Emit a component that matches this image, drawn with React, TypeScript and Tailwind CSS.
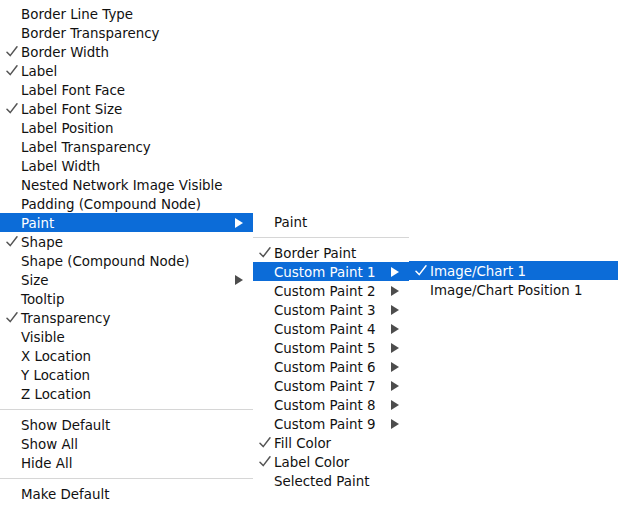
import React from "react";

type Item =
  | { sep: true }
  | { label: string; checked?: boolean; sub?: boolean; active?: boolean; sep?: false };

const mainItems: Item[] = [
  { label: "Border Line Type" },
  { label: "Border Transparency" },
  { label: "Border Width", checked: true },
  { label: "Label", checked: true },
  { label: "Label Font Face" },
  { label: "Label Font Size", checked: true },
  { label: "Label Position" },
  { label: "Label Transparency" },
  { label: "Label Width" },
  { label: "Nested Network Image Visible" },
  { label: "Padding (Compound Node)" },
  { label: "Paint", sub: true, active: true },
  { label: "Shape", checked: true },
  { label: "Shape (Compound Node)" },
  { label: "Size", sub: true },
  { label: "Tooltip" },
  { label: "Transparency", checked: true },
  { label: "Visible" },
  { label: "X Location" },
  { label: "Y Location" },
  { label: "Z Location" },
  { sep: true },
  { label: "Show Default" },
  { label: "Show All" },
  { label: "Hide All" },
  { sep: true },
  { label: "Make Default" },
];

const paintItems: Item[] = [
  { label: "Paint" },
  { sep: true },
  { label: "Border Paint", checked: true },
  { label: "Custom Paint 1", sub: true, active: true },
  { label: "Custom Paint 2", sub: true },
  { label: "Custom Paint 3", sub: true },
  { label: "Custom Paint 4", sub: true },
  { label: "Custom Paint 5", sub: true },
  { label: "Custom Paint 6", sub: true },
  { label: "Custom Paint 7", sub: true },
  { label: "Custom Paint 8", sub: true },
  { label: "Custom Paint 9", sub: true },
  { label: "Fill Color", checked: true },
  { label: "Label Color", checked: true },
  { label: "Selected Paint" },
];

const chartItems: Item[] = [
  { label: "Image/Chart 1", checked: true, active: true },
  { label: "Image/Chart Position 1" },
];

function Check({ light }: { light?: boolean }) {
  return (
    <svg width="12" height="11" viewBox="0 0 12 11" className="shrink-0">
      <path
        d="M1 6.2 L4.2 9.6 L11 0.8"
        fill="none"
        stroke={light ? "#ffffff" : "#555555"}
        strokeWidth="1.5"
        strokeLinecap="round"
        strokeLinejoin="round"
      />
    </svg>
  );
}

function Arrow({ light }: { light?: boolean }) {
  return (
    <svg width="8" height="10" viewBox="0 0 8 10" className="shrink-0">
      <path d="M0 0 L8 5 L0 10 Z" fill={light ? "#ffffff" : "#4d4d4d"} />
    </svg>
  );
}

function Menu({ items, className }: { items: Item[]; className: string }) {
  return (
    <div className={`flex flex-col bg-white py-1 ${className}`}>
      {items.map((it, i) =>
        it.sep ? (
          <div key={i} className="flex h-[12px] items-center">
            <div className="h-px w-full bg-[#d6d6d6]" />
          </div>
        ) : (
          <div
            key={i}
            className={`flex h-[19px] items-center pr-[10px] ${
              it.active ? "bg-[#0c6cd8] text-white" : "text-[#111]"
            }`}
          >
            <div className="flex w-[21px] shrink-0 justify-end pr-[3px]">
              {it.checked && <Check light={it.active} />}
            </div>
            <span className="flex-1 whitespace-nowrap pt-[2px]">{it.label}</span>
            {it.sub && <Arrow light={it.active} />}
          </div>
        )
      )}
    </div>
  );
}

export default function App() {
  return (
    <div className="flex h-[507px] w-[618px] items-start overflow-hidden bg-white font-['DejaVu_Sans',sans-serif] text-[13.4px] leading-none">
      <Menu items={mainItems} className="w-[253px]" />
      <Menu items={paintItems} className="mt-[208px] w-[156px]" />
      <Menu items={chartItems} className="mt-[257px] flex-1" />
    </div>
  );
}
